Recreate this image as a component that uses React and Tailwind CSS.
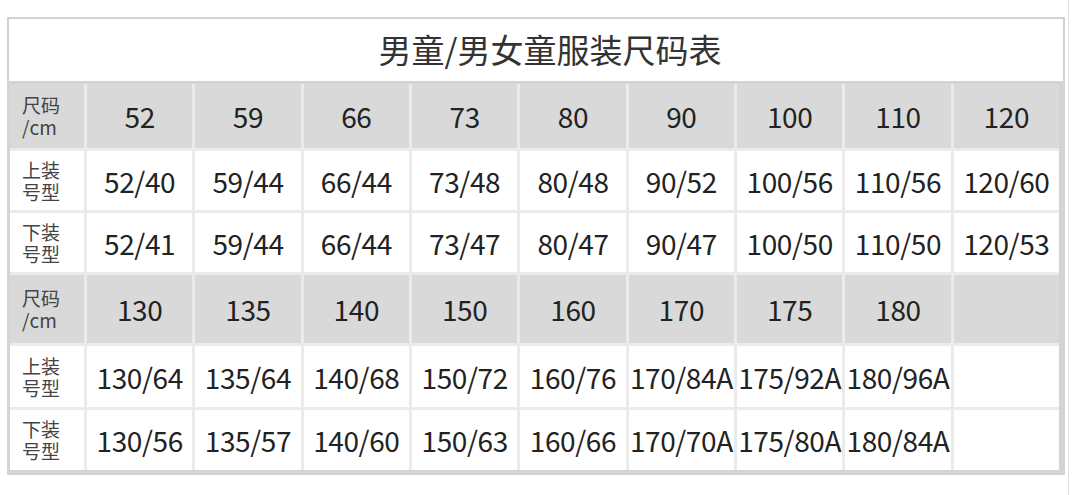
import React from 'react';

const font = { fontFamily: '"Noto Sans CJK SC", "Noto Sans", sans-serif' };

const blocks = [
  {
    sizes: ['52', '59', '66', '73', '80', '90', '100', '110', '120'],
    tops: ['52/40', '59/44', '66/44', '73/48', '80/48', '90/52', '100/56', '110/56', '120/60'],
    bottoms: ['52/41', '59/44', '66/44', '73/47', '80/47', '90/47', '100/50', '110/50', '120/53'],
  },
  {
    sizes: ['130', '135', '140', '150', '160', '170', '175', '180', ''],
    tops: ['130/64', '135/64', '140/68', '150/72', '160/76', '170/84A', '175/92A', '180/96A', ''],
    bottoms: ['130/56', '135/57', '140/60', '150/63', '160/66', '170/70A', '175/80A', '180/84A', ''],
  },
];

const Label = ({ top, bottom, grey }) => (
  <div
    className={`flex items-center pl-[12px] text-[19px] leading-[22px] text-[#444] ${
      grey ? 'bg-[#d9d9d9]' : 'bg-white'
    }`}
  >
    <p>
      {top}
      <br />
      {bottom}
    </p>
  </div>
);

const Cell = ({ value, grey }) => (
  <div
    className={`flex items-center justify-center whitespace-nowrap text-[28px] tracking-[-0.4px] text-[#222] ${
      grey ? 'bg-[#d9d9d9]' : 'bg-white'
    }`}
  >
    {value}
  </div>
);

export default function App() {
  return (
    <div className="h-[495px] w-[1080px] bg-white" style={font}>
      <div className="h-[495px] w-[1069px] border-r border-[#e2e2e2] pl-[7px] pt-[17px]">
        <div className="w-[1058px]">
          <div className="flex h-[64px] items-center justify-center border-x-[2px] border-t-[2px] border-[#d2d2d2] bg-white pl-[28px] text-[33px] text-[#333]">
            男童/男女童服装尺码表
          </div>
          <div className="grid grid-cols-[74px_repeat(9,minmax(0,1fr))] grid-rows-[64px_59px_59px_68px_61px_60px] gap-[3px] border-b-[5px] border-l-[3px] border-r-[6px] border-t-[3px] border-[#d4d4d4] bg-[#ebebeb]">
            {blocks.map((b, i) => (
              <React.Fragment key={i}>
                <Label top="尺码" bottom="/cm" grey />
                {b.sizes.map((s, j) => (
                  <Cell key={'s' + j} value={s} grey />
                ))}
                <Label top="上装" bottom="号型" />
                {b.tops.map((s, j) => (
                  <Cell key={'t' + j} value={s} />
                ))}
                <Label top="下装" bottom="号型" />
                {b.bottoms.map((s, j) => (
                  <Cell key={'b' + j} value={s} />
                ))}
              </React.Fragment>
            ))}
          </div>
        </div>
      </div>
    </div>
  );
}
